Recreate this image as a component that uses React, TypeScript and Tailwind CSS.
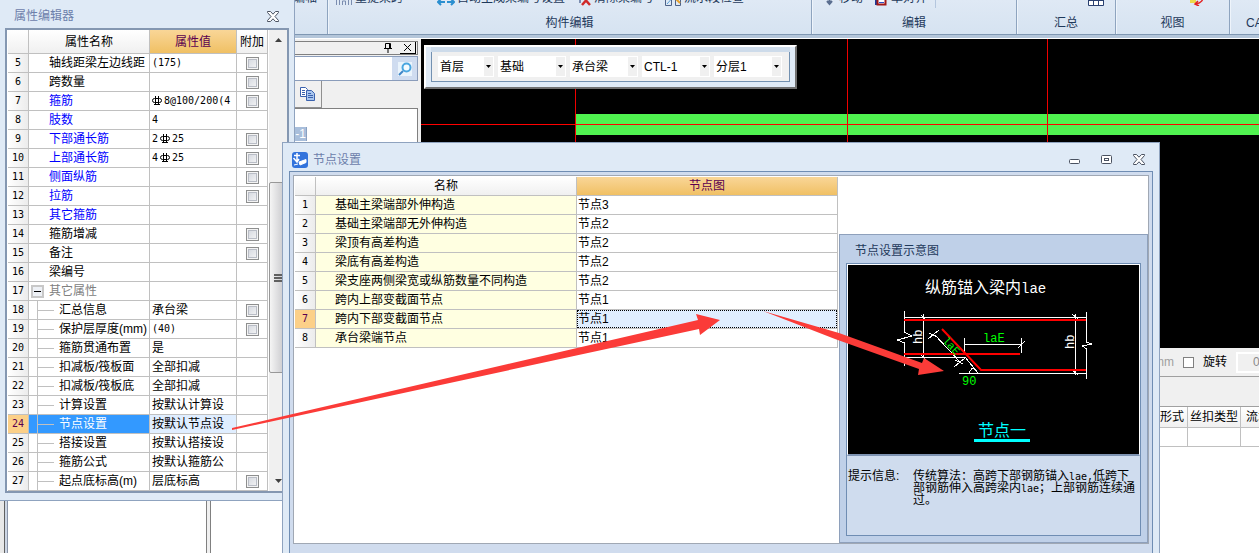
import { useState } from "react";
import type { ReactNode } from "react";
import clsx from "clsx";

interface PropRow {
  no: number;
  name: string;
  value?: ReactNode;
  extra?: boolean;
  kind?: "link" | "group" | "child";
}

function Rebar() {
  return (
    <svg width="10" height="10" viewBox="0 0 10 10" className="inline-block shrink-0" fill="none" stroke="#000">
      <rect x="0.5" y="2.5" width="9" height="4" rx="2" />
      <path d="M3.5 0v9M6.5 0v9M2 8.5h6" />
    </svg>
  );
}

// half-width latin text used inside value cells
function Mono({ children }: { children: ReactNode }) {
  return <span className="font-['DejaVu_Sans_Mono',monospace] text-[10px] leading-none">{children}</span>;
}

const PROPS: PropRow[] = [
  { no: 5, name: "轴线距梁左边线距", value: <Mono>(175)</Mono>, extra: true },
  { no: 6, name: "跨数量", extra: true },
  { no: 7, name: "箍筋", value: <><Rebar /><Mono>8@100/200(4</Mono></>, extra: true, kind: "link" },
  { no: 8, name: "肢数", value: <Mono>4</Mono>, kind: "link" },
  { no: 9, name: "下部通长筋", value: <><Mono>2</Mono><Rebar /><Mono>25</Mono></>, extra: true, kind: "link" },
  { no: 10, name: "上部通长筋", value: <><Mono>4</Mono><Rebar /><Mono>25</Mono></>, extra: true, kind: "link" },
  { no: 11, name: "侧面纵筋", extra: true, kind: "link" },
  { no: 12, name: "拉筋", extra: true, kind: "link" },
  { no: 13, name: "其它箍筋", kind: "link" },
  { no: 14, name: "箍筋增减", extra: true },
  { no: 15, name: "备注", extra: true },
  { no: 16, name: "梁编号" },
  { no: 17, name: "其它属性", kind: "group" },
  { no: 18, name: "汇总信息", value: "承台梁", extra: true, kind: "child" },
  { no: 19, name: "保护层厚度(mm)", value: <Mono>(40)</Mono>, extra: true, kind: "child" },
  { no: 20, name: "箍筋贯通布置", value: "是", kind: "child" },
  { no: 21, name: "扣减板/筏板面", value: "全部扣减", kind: "child" },
  { no: 22, name: "扣减板/筏板底", value: "全部扣减", kind: "child" },
  { no: 23, name: "计算设置", value: "按默认计算设", kind: "child" },
  { no: 24, name: "节点设置", value: "按默认节点设", kind: "child" },
  { no: 25, name: "搭接设置", value: "按默认搭接设", kind: "child" },
  { no: 26, name: "箍筋公式", value: "按默认箍筋公", kind: "child" },
  { no: 27, name: "起点底标高(m)", value: "层底标高", extra: true, kind: "child" },
];

const NODES = [
  ["基础主梁端部外伸构造", "节点3"],
  ["基础主梁端部无外伸构造", "节点2"],
  ["梁顶有高差构造", "节点2"],
  ["梁底有高差构造", "节点2"],
  ["梁支座两侧梁宽或纵筋数量不同构造", "节点2"],
  ["跨内上部变截面节点", "节点1"],
  ["跨内下部变截面节点", "节点1"],
  ["承台梁端节点", "节点1"],
];

const COMBOS = [
  { label: "楼层", value: "首层", width: "w-14" },
  { label: "类别", value: "基础", width: "w-[68px]" },
  { label: "构件类型", value: "承台梁", width: "w-[68px]" },
  { label: "构件", value: "CTL-1", width: "w-[68px]" },
  { label: "分层", value: "分层1", width: "w-[68px]" },
];

const CELL = "h-[19px] border-r border-b border-[#c0c0c0] p-0 leading-[18px] whitespace-nowrap overflow-hidden";
const HEAD = "border-r border-b border-[#c0c0c0] p-0 font-normal leading-[18px] bg-linear-to-b from-white to-[#f0f0f0]";
const HEAD_HOT = "border-r border-b border-[#c0c0c0] p-0 font-normal leading-[18px] text-[#5a0050] bg-linear-to-b from-[#f9d697] to-[#f0c063]";
const NUM = "bg-linear-to-r from-white to-[#ececec]";
const NUM_HOT = "bg-[#fcd088] text-[#5a0050]";

function RowNo({ n, hot }: { n: number; hot: boolean }) {
  return (
    <td className={clsx(CELL, hot ? NUM_HOT : NUM)}>
      <div className="flex h-[18px] items-center justify-center"><Mono>{n}</Mono></div>
    </td>
  );
}

function CloseGlyph() {
  return (
    <svg width="12" height="11" viewBox="0 0 12 11" fill="#fff" stroke="#4a5261">
      <path d="M.5.5h3L6 3.2 8.500.5h3v1L8 5.500l3.500 4v1h-3L6 7.800 3.500 10.500h-3v-1L4 5.500.5 1.500z" />
    </svg>
  );
}

function Ribbon() {
  const group = "flex flex-col items-center border-r border-[#8ea4bf] shadow-[inset_1px_0_0_#eef4fb] shrink-0 whitespace-nowrap";
  const row = "-mt-3 flex h-5 w-full shrink-0 items-center pl-2 text-[#1e395b]";
  const label = "mt-[6px] leading-[18px] text-[#1e395b]";
  return (
    <header className="flex h-[35px] shrink-0 overflow-hidden border-b border-[#7f97b2] bg-linear-to-b from-[#dfe9f5] to-[#d6e3f1]">
      <section className={clsx(group, "w-[328px]")}>
        <div className={clsx(row, "justify-end pr-[10px]")}>修改编轴</div>
      </section>
      <section className={clsx(group, "w-[484px]")}>
        <div className={row}>
          <svg width="16" height="16" viewBox="0 0 16 16" fill="none" stroke="#7b8db0">
            <path d="M.5 15V6.500h3V15M6.500 15v-4h3v4M12.500 15V6.500h3V15M3 9.500h10" />
          </svg>
          <span className="ml-[3px]">重提梁跨</span>
          <svg width="18" height="16" viewBox="0 0 18 16" className="ml-[34px]" fill="none">
            <path d="M6 0l2 8M12 0l-2 8" stroke="#333" strokeWidth="2" />
            <path d="M1 12h7M4 9l-3 3 3 3M10 12h7M14 9l3 3-3 3" stroke="#2b8fd0" strokeWidth="2" />
          </svg>
          <span className="ml-[2px]">自动生成梁编号设置</span>
          <svg width="13" height="16" viewBox="0 0 13 16" className="ml-[13px]" fill="none">
            <path d="M2 4v9" stroke="#7b8db0" strokeWidth="2" />
            <path d="M4 6l8 9M12 6l-8 9" stroke="#d02a2a" strokeWidth="2.500" />
          </svg>
          <span className="ml-[3px]">清除梁编号</span>
          <svg width="16" height="16" viewBox="0 0 16 16" className="ml-[11px]" fill="none">
            <path d="M.5 1v14.500h6V8.500h4v7h5V4" stroke="#4d6288" />
            <path d="M2 14l8-9" stroke="#58a0d8" />
            <path d="M11 9l4 4" stroke="#e6a02c" strokeWidth="2" />
          </svg>
          <span className="ml-[3px]">流水段检查</span>
        </div>
        <span className={label}>构件编辑</span>
      </section>
      <section className={clsx(group, "w-[205px]")}>
        <div className={row}>
          <svg width="15" height="16" viewBox="0 0 15 16" className="ml-[2px]" fill="none" stroke="#5a6e90" strokeWidth="2">
            <path d="M7.500 1v12M2 8h11M5 11l2.500 3 2.500-3" />
          </svg>
          <span className="ml-[2px]">移动</span>
          <svg width="12" height="16" viewBox="0 0 12 16" className="ml-3">
            <path d="M0 2h4v13H0z" fill="#1a3c9c" />
            <path d="M2.500 6.500h8v8h-8z" fill="#fff" stroke="#a01818" strokeWidth="2" />
            <path d="M4 9.500h5M4 12.500h5" stroke="#2a50c8" />
          </svg>
          <span className="ml-1">单对齐</span>
          <span className="ml-2 h-full w-px bg-[#b4c6de]" />
        </div>
        <span className={label}>编辑</span>
      </section>
      <section className={clsx(group, "w-[99px]")}>
        <div className={clsx(row, "justify-end pr-[10px]")}>
          <svg width="17" height="16" viewBox="0 0 17 16" fill="#fff" stroke="#2a4070">
            <path d="M.5 1v14.500h15V1M.5 10.500h15M5.500 4v11.500M10.500 4v11.500M12 11l4-4" />
          </svg>
        </div>
        <span className={label}>汇总</span>
      </section>
      <section className={clsx(group, "w-[114px]")}>
        <div className={clsx(row, "justify-end pr-6")}>
          <svg width="16" height="16" viewBox="0 0 16 16" fill="none">
            <path d="M1 9h6v4H1z" fill="#ecd94a" />
            <path d="M13 6c2 4-1 7-6 8M9 11l-3 3 4 2" stroke="#e32222" strokeWidth="1.500" />
          </svg>
        </div>
        <span className={label}>视图</span>
      </section>
      <section className={clsx(group, "w-[120px] items-start pl-4")}>
        <div className={row} />
        <span className={label}>CAD识别</span>
      </section>
    </header>
  );
}

function NavPanel() {
  return (
    <aside className="flex w-[421px] shrink-0 flex-col bg-[#f0f0f0] pt-[2px]">
      <div className="mr-[3px] flex h-[14px] items-center justify-end border border-[#808080] pr-px">
        <button aria-label="固定" className="mr-2">
          <svg width="8" height="10" viewBox="0 0 8 10" fill="none" stroke="#000">
            <path d="M1.500 5.500V.5h5v5M0 5.500h8M4 6v4M5.500 1v4" />
          </svg>
        </button>
        <button aria-label="关闭" className="flex h-3 w-4 items-center justify-center border-r border-b border-black">
          <svg width="7" height="7" viewBox="0 0 7 7" stroke="#000"><path d="M0 0l7 7M7 0L0 7" /></svg>
        </button>
      </div>
      <div className="mt-px mr-[3px] flex h-[25px] border border-[#8a9cba] bg-white">
        <input type="text" aria-label="搜索构件" className="min-w-0 flex-1 bg-white outline-none" />
        <button aria-label="搜索" className="flex w-[25px] items-center justify-center bg-[#cfdcf0]">
          <svg width="14" height="14" viewBox="0 0 14 14" className="bg-[#eaf4fc]" fill="none">
            <path d="M1 13l4-4" stroke="#3f86c8" strokeWidth="2" />
            <circle cx="8.500" cy="5.500" r="4" stroke="#4aa6e0" strokeWidth="2" fill="#f4fbff" />
          </svg>
        </button>
      </div>
      <button aria-label="复制" className="ml-[290px] flex h-[27px] w-8 items-center justify-end border-r border-b border-[#909090] pr-[6px]">
        <svg width="15" height="14" viewBox="0 0 15 14" stroke="#3b62ae">
          <path d="M.5.5h5l2 2v7h-7z" fill="#fff" />
          <path d="M2 3.500h3M2 5.500h3M2 7.500h3" />
          <path d="M6.500 3.500h5l3 3v7h-8z" fill="#a9c6ee" />
          <path d="M8 6.500h3M8 8.500h5M8 10.500h5" />
        </svg>
      </button>
      <div className="mr-[3px] flex-1 border-t border-r border-[#808080] bg-white pt-[18px] pl-[294px]">
        <div className="w-[13px] border-r border-[#8aa0c0] bg-[#a8bedb] text-right leading-[14px] text-white">-1</div>
      </div>
      <div className="flex h-[53px] shrink-0 bg-white">
        <div className="w-[5px] border-r border-[#606060] bg-[#e8e8e8]" />
        <div className="w-[3px] border-r border-[#8a94a8] bg-[#cdd6e4]" />
        <div className="w-[198px] bg-white" />
        <div className="w-[5px] border-x border-[#808080] bg-[#f0f0f0]" />
      </div>
    </aside>
  );
}

function Workspace() {
  const [rotate, setRotate] = useState(false);
  return (
    <main className="flex min-w-0 flex-1 flex-col bg-white">
      <div className="h-[309px] shrink-0 overflow-hidden bg-black">
        <svg width="100%" height="309" shapeRendering="crispEdges">
          <rect x="155" y="75" width="100%" height="21" fill="#50f250" />
          <path d="M154.500 0v309M426.500 0v309M626.500 0v309" stroke="#f00000" />
          <rect x="0" y="85" width="100%" height="1" fill="#ff0000" />
        </svg>
      </div>
      <div className="flex h-[29px] shrink-0 items-center overflow-hidden border-b border-[#a0a0a0] bg-[#f0f0f0] pl-[733px]">
        <span className="w-5 text-right text-[#a0a0a0]">mm</span>
        <span className="ml-1 h-6 w-px bg-[#909090]" />
        <label className="ml-[5px] flex shrink-0 items-center gap-[9px]">
          <input
            type="checkbox"
            checked={rotate}
            onChange={(e) => setRotate(e.target.checked)}
            className="size-[11px] appearance-none border border-[#808080] bg-white"
          />
          旋转
        </label>
        <input
          type="text"
          aria-label="旋转角度"
          defaultValue="0.000"
          disabled
          className="ml-[9px] h-[21px] w-20 shrink-0 border-2 border-white bg-[#f0f0f0] pl-[15px] text-[#8a8a8a]"
        />
      </div>
      <div className="h-[30px] shrink-0 border-b border-[#a0a0a0] bg-[#f0f0f0]" />
      <div className="overflow-hidden pl-[713px]">
        <table className="w-[220px] table-fixed border-separate border-spacing-0">
          <thead>
            <tr>
              <th className={clsx(HEAD, "h-[21px] w-[54px] text-right")}><div className="pr-[3px]">搭接形式</div></th>
              <th className={clsx(HEAD, "w-[53px]")}>丝扣类型</th>
              <th className={clsx(HEAD, "text-left")}><div className="pl-[5px]">流水段</div></th>
            </tr>
          </thead>
          <tbody>
            <tr><td className={CELL} /><td className={CELL} /><td className={CELL} /></tr>
          </tbody>
        </table>
      </div>
    </main>
  );
}

function ComboBar() {
  return (
    <div className="absolute top-[45px] left-[424px] border-2 border-t-white border-r-[#707070] border-b-[#707070] border-l-white bg-[#dfeaf6] px-[5px] pb-[5px]">
      <div className="h-[5px] bg-[#cddbea]" />
      <div className="flex h-[30px] items-center gap-1 border border-t-0 border-[#7391b1] bg-[#f0f0f0] pr-[7px] pl-[6px]">
        {COMBOS.map((c) => (
          <div key={c.label} className={clsx("flex h-[21px] shrink-0 items-center border border-white bg-white", c.width)}>
            <select aria-label={c.label} className="h-full min-w-0 flex-1 appearance-none bg-white pl-px outline-none">
              <option>{c.value}</option>
            </select>
            <span className="flex h-full w-[9px] shrink-0 items-center justify-center bg-[#f0f0f0]">
              <svg width="5" height="3" viewBox="0 0 5 3"><path d="M0 0h5L2.500 3z" /></svg>
            </span>
          </div>
        ))}
      </div>
    </div>
  );
}

function NameCell({ row, selected }: { row: PropRow; selected: boolean }) {
  if (row.kind === "child") {
    return (
      <div className="flex h-[18px] items-center">
        <span className="h-full w-[9px] shrink-0 border-r border-[#c0c0c0]" />
        <span className="h-px w-4 shrink-0 bg-[#c0c0c0]" />
        <span className={clsx("ml-[5px]", selected && "text-white")}>{row.name}</span>
      </div>
    );
  }
  if (row.kind === "group") {
    return (
      <div className="flex h-[18px] items-center text-[#808080]">
        <button aria-label="折叠" className="ml-[2px] flex size-[13px] items-center justify-center border-2 border-[#c8c8c8] bg-[#eef1f6]">
          <span className="h-px w-[7px] bg-black" />
        </button>
        <span className="ml-[5px]">{row.name}</span>
      </div>
    );
  }
  return <div className={clsx("h-[18px] pl-5", row.kind === "link" && "text-[#0000ff]")}>{row.name}</div>;
}

function PropertyEditor() {
  const [active, setActive] = useState(24);
  return (
    <section className="absolute top-0 left-0 w-[295px] border-r border-b border-[#8fa3bf] bg-[#dfeaf6] pb-[7px] pl-[5px]">
      <div className="flex h-7 items-center justify-between pt-1 pr-[15px] pl-[9px]">
        <h2 className="text-[#6d80ab]">属性编辑器</h2>
        <button aria-label="关闭属性编辑器"><CloseGlyph /></button>
      </div>
      <div className="mr-[5px] flex border-2 border-[#8497b1] bg-white pl-px">
        <table className="w-[260px] table-fixed border-separate border-spacing-0">
          <thead>
            <tr>
              <th className={clsx(HEAD, "h-6 w-[21px]")} />
              <th className={clsx(HEAD, "w-[121px]")}>属性名称</th>
              <th className={clsx(HEAD_HOT, "w-[87px]")}>属性值</th>
              <th className={HEAD}>附加</th>
            </tr>
          </thead>
          <tbody>
            {PROPS.map((row) => {
              const selected = row.no === active;
              return (
                <tr key={row.no} onClick={() => setActive(row.no)}>
                  <RowNo n={row.no} hot={selected} />
                  <td className={clsx(CELL, selected && "bg-[#3399ff]")}><NameCell row={row} selected={selected} /></td>
                  <td className={clsx(CELL, selected && "bg-[#e0eeff]")}>
                    <div className="flex h-[18px] items-center gap-[2px] pl-[2px]">{row.value}</div>
                  </td>
                  <td className={CELL}>
                    {row.extra && (
                      <input
                        type="checkbox"
                        aria-label={`${row.name} 附加`}
                        className="mx-auto block size-[13px] appearance-none border border-[#8e8f8f] bg-linear-to-br from-[#d0d4dc] to-[#f8f8f8] shadow-[inset_0_0_0_1px_#f4f4f4,inset_0_0_0_2px_#b9bdc6]"
                      />
                    )}
                  </td>
                </tr>
              );
            })}
          </tbody>
        </table>
        <div className="ml-px flex flex-1 flex-col items-center bg-[#f0f0f0] py-2">
          <svg width="7" height="4" viewBox="0 0 7 4" className="shrink-0" fill="#404040"><path d="M0 4h7L3.500 0z" /></svg>
          <div className="mt-[140px] flex h-[191px] w-full shrink-0 flex-col items-center justify-center gap-px rounded-xs border border-[#989898] bg-linear-to-r from-[#f5f5f5] to-[#c4c4c8]">
            <span className="h-[2px] w-2 bg-[#606060]" />
            <span className="h-[2px] w-2 bg-[#606060]" />
            <span className="h-[2px] w-2 bg-[#606060]" />
          </div>
          <svg width="7" height="4" viewBox="0 0 7 4" className="mt-auto shrink-0" fill="#404040"><path d="M0 0h7L3.500 4z" /></svg>
        </div>
      </div>
    </section>
  );
}

function NodeDiagram() {
  return (
    <svg viewBox="0 0 291 189" className="block w-full bg-black font-['Liberation_Mono','Noto_Sans_CJK_SC',monospace]">
      <text x="77" y="28" fill="#fff" fontSize="16">纵筋锚入梁内<tspan fontSize="14">lae</tspan></text>
      <g fill="none" stroke="#fff" shapeRendering="crispEdges">
        <path d="M56 52.500h183M56 92.500h61M111 108.500h128" />
        <path d="M56.500 46v21l7 4-14 4 7 3v23" />
        <path d="M238.500 47v30l5 2-9 2 4 3v30" />
        <path d="M75.500 49v43M73 50l5 5M73 90l5 5" />
        <path d="M227.500 49v61M224 49l6 5M224 105l6 5" />
        <path d="M116.500 73v17M173.500 73v15M116 79.500h58M170 83l7-7" />
        <path d="M117 92l13 16M87 70l25 27M80 74l11-9M81 68l8 4M106 102l11-9M107 95l8 4" />
        <path d="M121 108l3-5 4 2" />
      </g>
      <g fill="none" stroke="#f00" strokeWidth="2">
        <path d="M56 55h182M56 89h116M94 64l39 41h105" />
      </g>
      <g fill="#fff" fontSize="12">
        <text transform="translate(74 79) rotate(-90)">hb</text>
        <text transform="translate(226 84) rotate(-90)">hb</text>
      </g>
      <g fill="#0f0" fontSize="12">
        <text x="135" y="77">laE</text>
        <text x="114" y="120">90</text>
        <text transform="translate(94 76) rotate(47)" fontSize="11">laE</text>
      </g>
      <text x="130" y="171" fill="#0ff" fontSize="16">节点一</text>
      <path d="M126 174h56v3h-56z" fill="#0ff" />
    </svg>
  );
}

function NodePreview() {
  return (
    <aside className="mt-auto ml-px flex h-[309px] flex-1 flex-col border border-[#8ea0bb] bg-[#bfd0e8] p-[6px] pt-0">
      <h3 className="h-7 pt-1 pl-[9px] leading-6 text-[#1e395b]">节点设置示意图</h3>
      <div className="flex min-h-0 flex-1 flex-col border border-[#6f8db3] bg-[#cfdcee]">
        <div className="border border-b-2 border-white border-b-[#7e93b2]">
          <NodeDiagram />
        </div>
        <div className="flex pt-[14px] pl-px leading-3 whitespace-nowrap">
          <span className="w-[65px] shrink-0">提示信息:</span>
          <p>
            传统算法：高跨下部钢筋锚入<Mono>lae,</Mono>低跨下<br />
            部钢筋伸入高跨梁内<Mono>lae</Mono>；上部钢筋连续通<br />
            过。
          </p>
        </div>
      </div>
    </aside>
  );
}

function NodeDialog() {
  const [active, setActive] = useState(7);
  return (
    <section className="absolute top-[142px] right-[99px] bottom-0 left-[282px] flex flex-col border border-b-0 border-[#8fa3bf] bg-[#dfeaf6] px-[6px]">
      <div className="flex h-7 shrink-0 items-center pt-[5px] pr-2 pl-[3px]">
        <svg width="16" height="16" viewBox="0 0 16 16" fill="none" stroke="#fff">
          <rect width="16" height="16" rx="3" fill="#3273dc" stroke="none" />
          <path d="M5 1v9M2 3.500h6M1.500 6l3.500 4 2-3" strokeWidth="1.500" />
          <path d="M7 10l7-2.500v3L8 13z" fill="#fff" />
          <path d="M2 13l4-1" />
        </svg>
        <h2 className="ml-[5px] flex-1 text-[#6d80ab]">节点设置</h2>
        <div className="flex items-center gap-5">
          <button aria-label="最小化" className="pt-1">
            <svg width="12" height="6" viewBox="0 0 12 6" fill="#fff" stroke="#4a5261"><rect x=".5" y=".5" width="10" height="4" rx="1" /></svg>
          </button>
          <button aria-label="最大化">
            <svg width="12" height="10" viewBox="0 0 12 10" fill="#fff" stroke="#4a5261">
              <rect x=".5" y=".5" width="10" height="8" rx="1" />
              <rect x="3.500" y="3.500" width="4" height="2" />
            </svg>
          </button>
          <button aria-label="关闭"><CloseGlyph /></button>
        </div>
      </div>
      <div className="flex min-h-0 flex-1 flex-col border border-b-0 border-[#6f8db3] bg-[#d0dcee] px-[3px] pt-[3px] pb-[9px]">
        <div className="flex min-h-0 flex-1 border border-[#a0a8b4] bg-white pl-px">
          <div className="pt-px">
            <table className="w-[543px] table-fixed border-separate border-spacing-0">
              <thead>
                <tr>
                  <th className={clsx(HEAD, "h-[19px] w-[21px]")} />
                  <th className={clsx(HEAD, "w-[261px]")}>名称</th>
                  <th className={HEAD_HOT}>节点图</th>
                </tr>
              </thead>
              <tbody>
                {NODES.map(([name, node], i) => {
                  const selected = i + 1 === active;
                  return (
                    <tr key={name} onClick={() => setActive(i + 1)}>
                      <RowNo n={i + 1} hot={selected} />
                      <td className={clsx(CELL, "bg-[#ffffe1]")}><div className="h-[18px] pl-[19px]">{name}</div></td>
                      <td className={CELL}>
                        <div className={clsx("h-[18px] pl-px", selected && "bg-[#e0eeff] outline-1 -outline-offset-1 outline-dotted outline-black")}>{node}</div>
                      </td>
                    </tr>
                  );
                })}
              </tbody>
            </table>
          </div>
          <NodePreview />
        </div>
      </div>
    </section>
  );
}

export default function App() {
  return (
    <div className="relative flex h-screen flex-col overflow-hidden bg-white font-['Liberation_Sans','Noto_Sans_CJK_SC',sans-serif] text-[12px] text-black">
      <Ribbon />
      <div className="h-1 shrink-0 border-b border-white bg-[#b4c6da]" />
      <div className="flex min-h-0 flex-1">
        <NavPanel />
        <Workspace />
      </div>
      <ComboBar />
      <PropertyEditor />
      <NodeDialog />
      {/* pointer arrows */}
      <svg width="1259" height="553" className="pointer-events-none absolute top-0 left-0" fill="#fb3b38">
        <path d="M232 428l466-108-2-6 24 6-20 15-1-6L232 430z" />
        <path d="M763 311l76 22 83 30 2-5 20 13-26 4 1-6-84-30z" />
      </svg>
    </div>
  );
}
